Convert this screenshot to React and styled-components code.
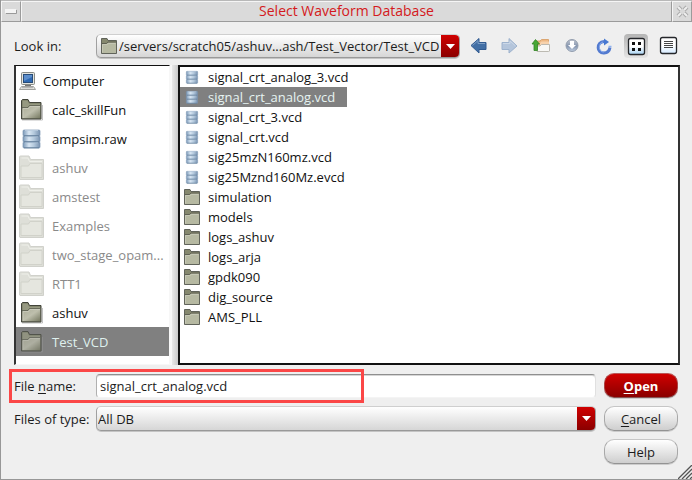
import React, { useState } from "react";
import styled, { createGlobalStyle, css } from "styled-components";

const GlobalStyle = createGlobalStyle`
  * { box-sizing: border-box; }
  body { margin: 0; background: #efefef; }
  body, button, input, select { font-family: "Open Sans", "Noto Sans", sans-serif; font-size: 13px; color: #1c1c1c; }
`;

const Dialog = styled.main`
  position: relative;
  display: flex;
  flex-direction: column;
  min-height: 100vh;
  border-left: 1px solid #979797;
  border-bottom: 1px solid #979797;
  background: #efefef;
`;

const TitleBar = styled.header`
  display: grid;
  grid-template-columns: 20px 1fr 20px;
  height: 22px;
  border-top: 1px solid #b8b8b8;
  background: #dadada;
`;

const titlePart = css`
  border: 1px solid;
  border-color: #f5f5f5 #9b9b9b #9b9b9b #f5f5f5;
  background: #dadada;
`;

const WindowButton = styled.button`
  ${titlePart}
  display: grid;
  place-items: center;
  padding: 0;
`;

const Title = styled.h1`
  ${titlePart}
  margin: 0;
  color: #d41920;
  font-size: 14px;
  font-weight: 400;
  line-height: 18px;
  text-align: center;
`;

const Toolbar = styled.div`
  display: grid;
  grid-template-columns: 82px 1fr auto;
  align-items: center;
  padding: 12px 12px 7px 13px;
`;

const Label = styled.label`
  line-height: 24px;
  white-space: nowrap;
`;

const ComboFrame = styled.div`
  display: grid;
  grid-template-columns: ${(p) => (p.$icon ? "23px" : "0")} 1fr 18px;
  align-items: center;
  height: ${(p) => (p.$icon ? 24 : 25)}px;
  min-width: 0;
  border: 1px solid;
  border-color: #cfcfcf #a0a0a0 #999 #a0a0a0;
  border-radius: 5px;
  overflow: hidden;
  background: linear-gradient(#fff, #d6d6d6);
  box-shadow: 0 1px 0 #c4c4c4;
`;

const ComboSelect = styled.select`
  grid-area: 1 / 1 / 2 / 4;
  width: 100%;
  height: 100%;
  padding: 0 18px 0 ${(p) => (p.$icon ? 22 : 1)}px;
  border: 0;
  background: transparent;
  appearance: none;
  outline: none;
`;

const ComboIcon = styled.span`
  grid-area: 1 / 1 / 2 / 2;
  display: grid;
  place-items: center;
  pointer-events: none;
`;

const ComboArrow = styled.span`
  grid-area: 1 / 3 / 2 / 4;
  display: grid;
  place-items: center;
  height: 100%;
  background: linear-gradient(#d00000, #8a0000);
  pointer-events: none;
`;

const Tools = styled.div`
  display: flex;
  gap: 8px;
  padding-left: 4px;
`;

const ToolButton = styled.button`
  display: grid;
  place-items: center;
  width: 24px;
  height: 24px;
  padding: 0;
  border: 0;
  border-radius: 4px;
  background: ${(p) => (p.$pressed ? "linear-gradient(#b5b5b5, #e4e4e4)" : "transparent")};
`;

const Panes = styled.div`
  flex: 1;
  display: grid;
  grid-template-columns: 156px 8px 1fr;
  padding: 0 12px 0 13px;
`;

const PlaceList = styled.ul`
  margin: 0;
  padding: 0;
  list-style: none;
  border: solid;
  border-width: 1px 1px 1px 2px;
  border-color: #111 #f7f7f7 #f7f7f7 #333;
  background: #fff;
`;

const Splitter = styled.div`
  border-left: 2px solid #f7f7f7;
  background: linear-gradient(90deg, #e8e8e8, #c9c9c9);
  cursor: col-resize;
`;

const FileList = styled.ul`
  margin: 0;
  padding: 0 0 1px;
  list-style: none;
  border: 2px solid;
  border-color: #111 #333 #111 #111;
  background: #fff;
`;

const PlaceButton = styled.button`
  display: flex;
  align-items: center;
  gap: ${(p) => (p.$root ? 5 : 8)}px;
  width: 100%;
  height: 29px;
  padding: 0 2px 0 ${(p) => (p.$root ? 2 : 4)}px;
  border: 0;
  background: ${(p) => (p.$selected ? "#808080" : "transparent")};
  color: ${(p) => (p.$selected ? "#dff0ee" : p.$dim ? "#8a8a8a" : "#111")};
  text-align: left;
  white-space: nowrap;

  svg { flex: none; overflow: visible; opacity: ${(p) => (p.$selected ? 0.75 : 1)}; }
`;

const FileButton = styled.button`
  display: flex;
  align-items: center;
  gap: 7px;
  height: 20px;
  padding: 0 12px 0 3px;
  border: 0;
  background: ${(p) => (p.$selected ? "#808080" : "transparent")};
  color: ${(p) => (p.$selected ? "#e6f4f2" : "#111")};
  white-space: nowrap;
`;

const Form = styled.form`
  display: grid;
  grid-template-columns: 82px 1fr 74px;
  grid-auto-rows: 25px;
  row-gap: 8px;
  padding: 8px 14px 15px 13px;
`;

const FieldRow = styled.div`
  position: relative;
  grid-column: 1 / 3;
  display: grid;
  grid-template-columns: 82px 1fr;
  align-items: center;
  margin-right: 8px;
`;

const Highlight = styled.span`
  position: absolute;
  top: -4px;
  left: -5px;
  width: 355px;
  height: 34px;
  border: 3px solid #fb4747;
  pointer-events: none;
`;

const TextInput = styled.input`
  width: 100%;
  height: 24px;
  padding: 0 3px;
  border: 1px solid;
  border-color: #8f8f8f #e0e0e0 #f4f4f4 #b0b0b0;
  border-radius: 4px;
  background: #fff;
  box-shadow: inset 0 1px 0 #d6d6d6;
  outline: none;
`;

const ActionButton = styled.button`
  grid-column: 3;
  padding: 0;
  border: 1px solid;
  border-color: ${(p) => (p.$primary ? "#b55 #a44 #855 #a44" : "#c6c6c6 #a8a8a8 #939393 #a8a8a8")};
  border-radius: 10px;
  background: ${(p) => (p.$primary ? "linear-gradient(#d00000, #8a0000)" : "linear-gradient(#fff, #cecece)")};
  color: ${(p) => (p.$primary ? "#fff" : "#1c1c1c")};
  font-weight: ${(p) => (p.$primary ? 700 : 400)};
  box-shadow: 0 1px 0 #ccc;
`;

const Mnemonic = styled.u`
  text-underline-offset: 2px;
`;

const Grip = styled.svg`
  position: absolute;
  right: 0;
  bottom: 0;
`;

function FolderIcon({ large, dim }) {
  if (dim) {
    return (
      <svg width="24" height="24" viewBox="0 0 24 24">
        <path d="M-.5 23V1Q-.5 0 .5 0H9L10.5 3.5H23.5V23.5H0Z" fill="#dedfd8" stroke="#d0d1cb" />
        <path d="M1 10H8.5L10 7.5H22V21.5H1Z" fill="#e5e6df" stroke="#d1d2ca" />
        <path d="M1.5 2H8L9.5 5.5H22" fill="none" stroke="#eeefe9" />
      </svg>
    );
  }
  return large ? (
    <svg width="24" height="24" viewBox="0 0 24 24">
      <defs>
        <linearGradient id="folderLarge" x1="0" y1="0" x2="1" y2="1">
          <stop offset="0" stopColor="#acad98" /><stop offset=".5" stopColor="#bebfad" /><stop offset="1" stopColor="#73765e" />
        </linearGradient>
      </defs>
      <path d="M2 22H22.5V7" fill="none" stroke="#999" strokeWidth="1" opacity=".6" />
      <path d="M1.5 21V2.5L2.5 1.5H8L9.5 4.5H21V21Z" fill="#74775f" stroke="#42443a" />
      <path d="M2.5 8V3L3 2.5H7.5L9 5.5H20V7H9.5L8 9H2.5Z" fill="#969981" />
      <path d="M2 9.5H8L9.5 7.5H20.5V20.5H2Z" fill="url(#folderLarge)" stroke="#54574a" strokeWidth=".7" />
      <path d="M3 20V10.5H8.5L10 8.5H20" fill="none" stroke="#d3d4c6" strokeWidth=".6" />
    </svg>
  ) : (
    <svg width="18" height="18" viewBox="0 0 18 18">
      <path d="M1.5 16.5V1.5H7L8 3.5H16.5V16.5Z" fill="#85886e" stroke="#60635a" />
      <path d="M2 7H6.5L8 5.5H16V16H2Z" fill="#b6b9a2" />
      <path d="M2 6.5H6.5L8 5H16" fill="none" stroke="#55574b" strokeWidth=".8" />
      <path d="M2.5 15.5V7.5H7L8.5 6.5H15.5" fill="none" stroke="#cccdbd" strokeWidth=".7" />
    </svg>
  );
}

function DatabaseIcon({ large }) {
  return (
    <svg width={large ? 24 : 18} height={large ? 24 : 18} viewBox={large ? "0 0 24 24" : "-2 -2 27 27"}>
      <defs>
        <linearGradient id="disk">
          <stop offset="0" stopColor="#7a98b7" /><stop offset=".35" stopColor="#d8e6f3" /><stop offset=".65" stopColor="#b3c8dc" /><stop offset="1" stopColor="#7892b0" />
        </linearGradient>
      </defs>
      <g fill="url(#disk)" stroke="#7c96b1" strokeWidth=".7">
        <rect x="3" y="3" width="17" height="6" rx="1" />
        <rect x="3" y="9" width="17" height="6" rx="1" />
        <rect x="3" y="15" width="17" height="6" rx="1" />
      </g>
      <path d="M5 3.5H18M5 9.7H18M5 15.7H18" stroke="#c3d4e5" strokeWidth=".7" />
      <path d="M4 8.8H19M4 14.8H19M4 20.8H19" stroke="#607c99" strokeWidth=".9" />
    </svg>
  );
}

function ComputerIcon() {
  return (
    <svg width="20" height="20" viewBox="0 0 20 20">
      <rect x="3.5" y="1.5" width="13" height="12" rx="1" fill="#e3e4df" stroke="#888a85" />
      <rect x="5.5" y="3.5" width="9" height="8" fill="#2f69b2" stroke="#274b78" />
      <path d="M6 4H14V6L6 10Z" fill="#79a5dc" opacity=".6" />
      <path d="M7 14H13V15H7Z" fill="#777" />
      <path d="M3.5 15.5H15.5L17.5 18.5H1.5Z" fill="#e5e5e1" stroke="#a0a19d" />
      <path d="M4 16.7H15" stroke="#aaa" />
    </svg>
  );
}

function ArrowIcon({ forward }) {
  return (
    <svg width="24" height="24" viewBox="0 0 24 24">
      {forward ? (
        <>
          <path d="M6 8.5H13V4.5L21 12L13 19V15.5H6Z" fill="#b4c5db" stroke="#9db2cd" strokeLinejoin="round" />
          <path d="M7 9.5H14V7L19.5 12" fill="none" stroke="#ccd8e7" />
        </>
      ) : (
        <>
          <path d="M7 11.5L15 4.5V8.5H22V15.5H15V19Z" fill="#426fa5" stroke="#315b91" strokeLinejoin="round" />
          <path d="M8.5 11.5L14 6.5V9.5H21" fill="none" stroke="#7e9fc5" />
        </>
      )}
    </svg>
  );
}

function ParentIcon() {
  return (
    <svg width="24" height="24" viewBox="0 0 24 24">
      <path d="M9 7H12L13.5 5.5H20.5V11H9Z" fill="#efb984" stroke="#d69b60" strokeWidth=".8" />
      <path d="M12 9L13.5 7.5H21V11H12Z" fill="#f8d3ac" />
      <path d="M9 12H12L13.5 10.5H21.5V17Q21.5 17.5 20.5 17.5H9Z" fill="#f8f8f5" stroke="#b5b3aa" strokeWidth=".9" />
      <path d="M7.5 5.5L11.5 10H9.5V16.5H6V10H4Z" fill="#48a735" stroke="#348526" strokeWidth=".8" />
    </svg>
  );
}

function DownIcon() {
  return (
    <svg width="24" height="24" viewBox="0 0 24 24">
      <defs>
        <linearGradient id="ball" x1="0" y1="0" x2="0" y2="1">
          <stop offset="0" stopColor="#c5c9d1" /><stop offset=".55" stopColor="#8494ae" /><stop offset="1" stopColor="#c1cfe2" />
        </linearGradient>
      </defs>
      <circle cx="12" cy="11.5" r="6" fill="url(#ball)" stroke="#929dae" />
      <path d="M10 7H14V11H16L12 15L8 11H10Z" fill="#fff" />
    </svg>
  );
}

function ReloadIcon() {
  return (
    <svg width="24" height="24" viewBox="0 0 24 24">
      <path d="M12 7.5C4 8 4.5 19.5 12 19C15.2 18.8 17.5 16.5 18 13.5" fill="none" stroke="#537bd0" strokeWidth="3" />
      <path d="M11 8C6 9 6 18.5 12 18" fill="none" stroke="#86a9ec" strokeWidth="1" />
      <path d="M12 4.5L17 8L12 11.5Z" fill="#4778d1" />
      <path d="M16.5 12.5H19.5" stroke="#8eb1ef" strokeWidth="1.5" />
    </svg>
  );
}

function ViewIcon({ grid }) {
  return (
    <svg width="24" height="24" viewBox="0 0 24 24">
      <defs>
        <linearGradient id={grid ? "gridView" : "listView"} x1="0" y1="0" x2="0" y2="1">
          <stop offset=".5" stopColor="#fff" /><stop offset="1" stopColor={grid ? "#a5d2f4" : "#d4eaff"} />
        </linearGradient>
      </defs>
      <rect x="4.5" y={grid ? 4.5 : 3.5} width="16" height="16" rx="2" fill={`url(#${grid ? "gridView" : "listView"})`} stroke="#25272b" strokeWidth="1.3" />
      {grid ? (
        <path d="M8 8H11V11H8ZM14 8H17V11H14ZM8 14H11V17H8ZM14 14H17V17H14Z" fill="#111" />
      ) : (
        <path d="M8 7.5H17M8 9.5H17M8 11.5H17M8 13.5H17" stroke="#454545" />
      )}
    </svg>
  );
}

function Combo({ id, icon, label, value }) {
  return (
    <ComboFrame $icon={icon}>
      <ComboSelect id={id} $icon={icon} aria-label={label} defaultValue={value}>
        <option>{value}</option>
      </ComboSelect>
      {icon && <ComboIcon><FolderIcon /></ComboIcon>}
      <ComboArrow>
        <svg width="9" height="5" viewBox="0 0 9 5"><path d="M0 0H9L4.5 5Z" fill="#fff" /></svg>
      </ComboArrow>
    </ComboFrame>
  );
}

const places = [
  { name: "Computer", type: "root" },
  { name: "calc_skillFun" },
  { name: "ampsim.raw", type: "database" },
  { name: "ashuv", dim: true },
  { name: "amstest", dim: true },
  { name: "Examples", dim: true },
  { name: "two_stage_opam...", dim: true },
  { name: "RTT1", dim: true },
  { name: "ashuv" },
  { name: "Test_VCD" },
];

const databases = [
  "signal_crt_analog_3.vcd", "signal_crt_analog.vcd", "signal_crt_3.vcd",
  "signal_crt.vcd", "sig25mzN160mz.vcd", "sig25Mznd160Mz.evcd",
];
const folders = ["simulation", "models", "logs_ashuv", "logs_arja", "gpdk090", "dig_source", "AMS_PLL"];

export default function App() {
  const [place, setPlace] = useState(9);
  const [file, setFile] = useState("signal_crt_analog.vcd");

  return (
    <>
      <GlobalStyle />
      <Dialog aria-label="Select Waveform Database">
        <TitleBar>
          <WindowButton aria-label="Window menu">
            <svg width="12" height="5" viewBox="0 0 12 5">
              <rect width="11" height="4" fill="#f4f4f4" /><path d="M1 4.5H11.5V1" fill="none" stroke="#999" />
            </svg>
          </WindowButton>
          <Title>Select Waveform Database</Title>
          <WindowButton aria-label="Close">
            <svg width="13" height="13" viewBox="0 0 13 13">
              <path d="M2 2L5 5M8 8L11 11M11 2L8 5M5 8L2 11" stroke="#aaa" strokeWidth="4" />
              <path d="M2 2L5 5M8 8L11 11M11 2L8 5M5 8L2 11" stroke="#eee" strokeWidth="2" />
            </svg>
          </WindowButton>
        </TitleBar>
        <Toolbar>
          <Label htmlFor="directory">Look in:</Label>
          <Combo id="directory" icon value="/servers/scratch05/ashuv...ash/Test_Vector/Test_VCD" />
          <Tools>
            <ToolButton aria-label="Back"><ArrowIcon /></ToolButton>
            <ToolButton aria-label="Forward"><ArrowIcon forward /></ToolButton>
            <ToolButton aria-label="Parent directory"><ParentIcon /></ToolButton>
            <ToolButton aria-label="Down"><DownIcon /></ToolButton>
            <ToolButton aria-label="Reload"><ReloadIcon /></ToolButton>
            <ToolButton aria-label="List view" aria-pressed="true" $pressed><ViewIcon grid /></ToolButton>
            <ToolButton aria-label="Detail view"><ViewIcon /></ToolButton>
          </Tools>
        </Toolbar>
        <Panes>
          <PlaceList>
            {places.map((item, index) => (
              <li key={index}>
                <PlaceButton $root={item.type === "root"} $dim={item.dim} $selected={place === index} onClick={() => setPlace(index)}>
                  {item.type === "root" ? <ComputerIcon /> : item.type === "database" ? <DatabaseIcon large /> : <FolderIcon large dim={item.dim} />}
                  {item.name}
                </PlaceButton>
              </li>
            ))}
          </PlaceList>
          <Splitter />
          <FileList>
            {databases.map((name) => (
              <li key={name}>
                <FileButton $selected={file === name} onClick={() => setFile(name)}><DatabaseIcon />{name}</FileButton>
              </li>
            ))}
            {folders.map((name) => (
              <li key={name}><FileButton><FolderIcon />{name}</FileButton></li>
            ))}
          </FileList>
        </Panes>
        <Form onSubmit={(event) => event.preventDefault()}>
          <FieldRow>
            <Label htmlFor="filename">File <Mnemonic>n</Mnemonic>ame:</Label>
            <TextInput id="filename" value={file} onChange={(event) => setFile(event.target.value)} />
            <Highlight />
          </FieldRow>
          <ActionButton type="submit" $primary><Mnemonic>O</Mnemonic>pen</ActionButton>
          <FieldRow>
            <Label htmlFor="filetype">Files of type:</Label>
            <Combo id="filetype" value="All DB" />
          </FieldRow>
          <ActionButton type="button"><Mnemonic>C</Mnemonic>ancel</ActionButton>
          <ActionButton type="button">Help</ActionButton>
        </Form>
        <Grip width="14" height="14" viewBox="0 0 14 14" aria-hidden="true">
          <path d="M0 14L14 0M4 14L14 4M8 14L14 8M12 14L14 12" stroke="#555" strokeWidth="1.3" />
        </Grip>
      </Dialog>
    </>
  );
}
